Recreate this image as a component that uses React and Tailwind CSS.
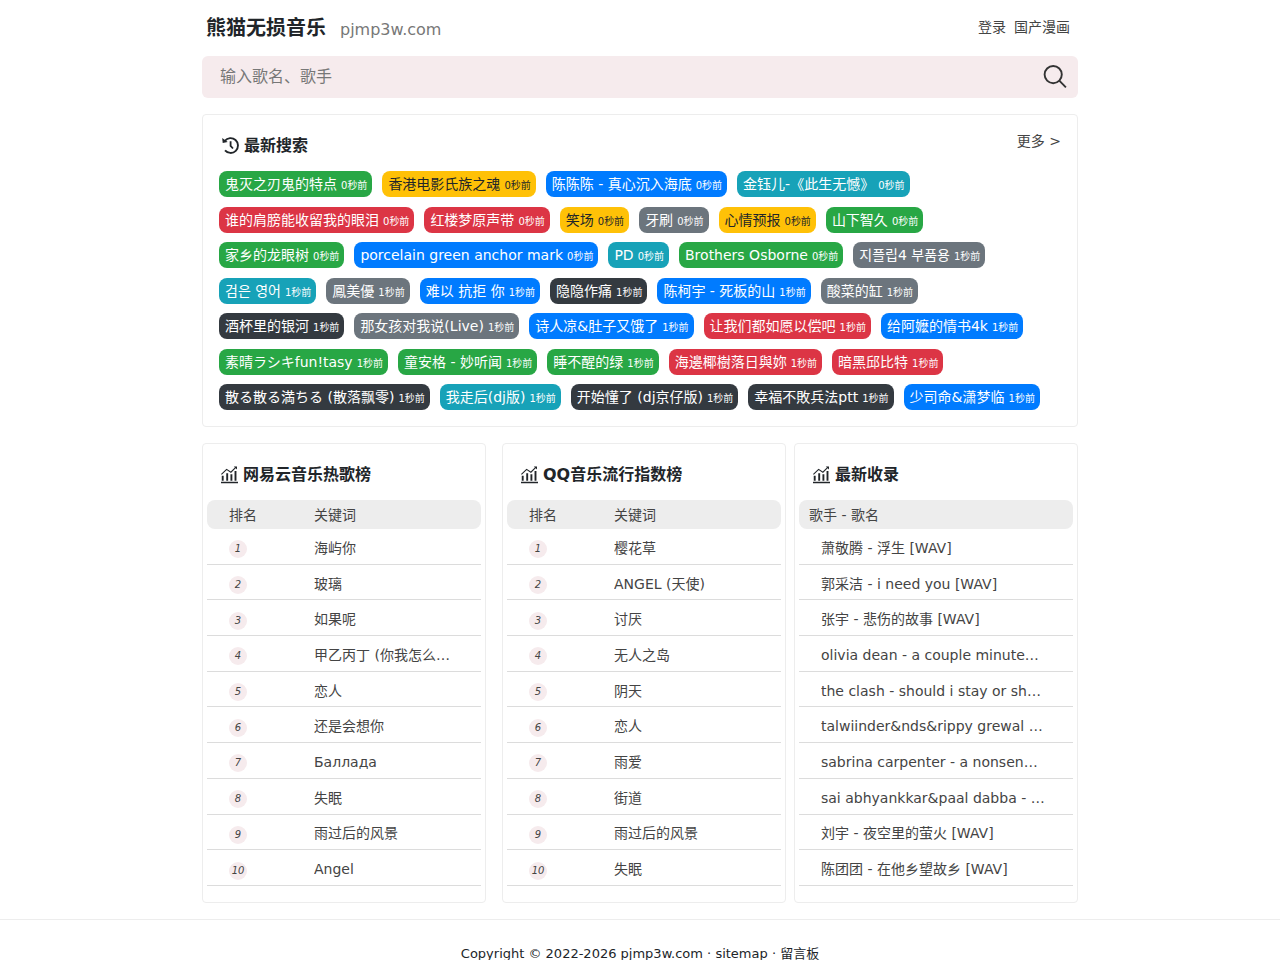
const FONT = 'font-["DejaVu_Sans","Noto_Sans_CJK_SC","Noto_Sans_CJK_KR",sans-serif]';

const TONES = {
  green: 'bg-[#28a745] text-white',
  yellow: 'bg-[#ffc107] text-[#212529]',
  blue: 'bg-[#007bff] text-white',
  teal: 'bg-[#17a2b8] text-white',
  red: 'bg-[#dc3545] text-white',
  gray: 'bg-[#6c757d] text-white',
  dark: 'bg-[#343a40] text-white',
};

const SEARCHES = [
  ['鬼灭之刃鬼的特点', 0, 'green'],
  ['香港电影氏族之魂', 0, 'yellow'],
  ['陈陈陈 - 真心沉入海底', 0, 'blue'],
  ['金钰儿-《此生无憾》', 0, 'teal'],
  ['谁的肩膀能收留我的眼泪', 0, 'red'],
  ['红楼梦原声带', 0, 'red'],
  ['笑场', 0, 'yellow'],
  ['牙刷', 0, 'gray'],
  ['心情预报', 0, 'yellow'],
  ['山下智久', 0, 'green'],
  ['家乡的龙眼树', 0, 'green'],
  ['porcelain green anchor mark', 0, 'blue'],
  ['PD', 0, 'teal'],
  ['Brothers Osborne', 0, 'green'],
  ['지플립4 부품용', 1, 'gray'],
  ['검은 영어', 1, 'teal'],
  ['鳳美優', 1, 'gray'],
  ['难以 抗拒 你', 1, 'blue'],
  ['隐隐作痛', 1, 'dark'],
  ['陈柯宇 - 死板的山', 1, 'blue'],
  ['酸菜的缸', 1, 'gray'],
  ['酒杯里的银河', 1, 'dark'],
  ['那女孩对我说(Live)', 1, 'gray'],
  ['诗人凉&肚子又饿了', 1, 'blue'],
  ['让我们都如愿以偿吧', 1, 'red'],
  ['给阿嬷的情书4k', 1, 'blue'],
  ['素晴ラシキfun!tasy', 1, 'green'],
  ['童安格 - 妙听闻', 1, 'green'],
  ['睡不醒的绿', 1, 'green'],
  ['海邊椰樹落日與妳', 1, 'red'],
  ['暗黑邱比特', 1, 'red'],
  ['散る散る満ちる (散落飘零)', 1, 'dark'],
  ['我走后(dj版)', 1, 'teal'],
  ['开始懂了 (dj京仔版)', 1, 'dark'],
  ['幸福不敗兵法ptt', 1, 'dark'],
  ['少司命&潇梦临', 1, 'blue'],
];

const NETEASE = ['海屿你', '玻璃', '如果呢', '甲乙丙丁 (你我怎么…', '恋人', '还是会想你', 'Баллада', '失眠', '雨过后的风景', 'Angel'];
const QQ = ['樱花草', 'ANGEL (天使)', '讨厌', '无人之岛', '阴天', '恋人', '雨爱', '街道', '雨过后的风景', '失眠'];
const LATEST = [
  '萧敬腾 - 浮生 [WAV]',
  '郭采洁 - i need you [WAV]',
  '张宇 - 悲伤的故事 [WAV]',
  'olivia dean - a couple minute…',
  'the clash - should i stay or sh…',
  'talwiinder&nds&rippy grewal …',
  'sabrina carpenter - a nonsen…',
  'sai abhyankkar&paal dabba - …',
  '刘宇 - 夜空里的萤火 [WAV]',
  '陈团团 - 在他乡望故乡 [WAV]',
];

function HistoryIcon() {
  return (
    <svg className="h-5 w-5 shrink-0" viewBox="0 0 20 20" fill="none" stroke="currentColor" strokeWidth="1.9" aria-hidden="true">
      <path d="M4.8 4.9A7.4 7.4 0 1 1 5 14.4" />
      <path d="M2.2 1.9l.5 5.2 5-1.2z" fill="currentColor" stroke="none" />
      <path d="M10.6 5.3v4.6l2.4 2.6" strokeWidth="1.8" />
    </svg>
  );
}

function ChartIcon() {
  return (
    <svg className="h-5 w-5 shrink-0" viewBox="0 1 20 20" fill="none" stroke="currentColor" aria-hidden="true">
      <path d="M2 18.5h17" strokeWidth="1.5" />
      <path d="M3.7 16.8v-5M8.2 16.8V9.2M12.4 16.8v-6.6M16.5 16.8V7" strokeWidth="1.9" />
      <path d="M2.4 10.4L7.6 5.4l4.3 2.8L17 3.2" strokeWidth="1.1" />
      <path d="M14.8 2.4h3.2v3.2z" fill="currentColor" stroke="none" />
    </svg>
  );
}

function SearchIcon() {
  return (
    <svg className="h-7 w-7" viewBox="0 0 28 28" fill="none" stroke="currentColor" strokeWidth="1.9" aria-hidden="true">
      <circle cx="12.2" cy="11.6" r="8.6" />
      <path d="M18.3 17.7l6.6 6.6" />
    </svg>
  );
}

function CardTitle({ children }) {
  return (
    <h2 className="flex items-center gap-1 px-3 text-base font-bold text-[#212529]">
      <ChartIcon />
      {children}
    </h2>
  );
}

function RankCard({ title, songs, className }) {
  return (
    <section className={`min-w-0 flex-1 rounded border border-[#ededed] px-1 pt-[19px] pb-4 ${className}`}>
      <CardTitle>{title}</CardTitle>
      <table className="mt-[13px] h-[386px] w-full table-fixed border-separate border-spacing-0 text-sm text-[#444]">
        <thead>
          <tr>
            <th className="h-[29px] w-[85px] rounded-l-lg bg-[#ededed] pl-[22px] text-left font-normal">排名</th>
            <th className="h-[29px] rounded-r-lg bg-[#ededed] pl-[22px] text-left font-normal">关键词</th>
          </tr>
        </thead>
        <tbody>
          {songs.map((song, i) => (
            <tr key={i}>
              <td className="border-b border-[#dcdcdc] pt-[6px] pl-[22px]">
                <i className="flex h-[18px] w-[18px] items-center justify-center rounded-full bg-[#f6ebed] text-[10px] leading-[18px]">{i + 1}</i>
              </td>
              <td className="h-[35px] border-b border-[#dcdcdc] pt-[3px] pr-[22px] pl-[22px]">
                <a href="#" className="block truncate">{song}</a>
              </td>
            </tr>
          ))}
        </tbody>
      </table>
    </section>
  );
}

export default function App() {
  return (
    <div lang="zh-CN" className={`${FONT} bg-white text-[#212529]`}>
      <div className="mx-auto w-full max-w-[876px]">
        <header className="flex h-14 items-center justify-between pr-2 pl-1">
          <div className="flex items-baseline gap-[14px]">
            <h1 className="text-xl font-bold">
              <a href="#">熊猫无损音乐</a>
            </h1>
            <span className="text-base text-[#777]">pjmp3w.com</span>
          </div>
          <nav className="flex gap-2 pb-[2px] text-sm text-[#444]">
            <a href="#">登录</a>
            <a href="#">国产漫画</a>
          </nav>
        </header>

        <form className="flex h-[42px] items-center rounded-md bg-[#f6ebed] pr-[9px] pl-[18px]" onSubmit={(e) => e.preventDefault()}>
          <input
            type="text"
            aria-label="输入歌名、歌手"
            placeholder="输入歌名、歌手"
            className="min-w-0 flex-1 bg-transparent text-base outline-none placeholder:text-[#777]"
          />
          <button type="submit" aria-label="搜索" className="text-[#333]">
            <SearchIcon />
          </button>
        </form>

        <section className="mt-4 rounded border border-[#ededed] px-4 py-4">
          <div className="flex items-start justify-between">
            <h2 className="flex items-center gap-1 pt-[3px] pl-[1px] text-base font-bold">
              <HistoryIcon />
              最新搜索
            </h2>
            <a href="#" className="text-sm text-[#444]">更多 &gt;</a>
          </div>
          <div className="mt-[13px] flex min-h-[239px] flex-wrap content-between gap-x-[10px] gap-y-[9px] pr-[10px]">
            {SEARCHES.map(([name, age, tone]) => (
              <a key={name} href="#" className={`flex items-baseline gap-1 rounded-lg py-[3px] pr-[5px] pl-[6px] text-sm whitespace-nowrap ${TONES[tone]}`}>
                <span>{name}</span>
                <span className="text-[10px]">{age}秒前</span>
              </a>
            ))}
          </div>
        </section>

        <div className="mt-4 flex">
          <RankCard title="网易云音乐热歌榜" songs={NETEASE} className="mr-4" />
          <RankCard title="QQ音乐流行指数榜" songs={QQ} className="mr-2" />
          <section className="min-w-0 flex-1 rounded border border-[#ededed] px-1 pt-[19px] pb-4">
            <CardTitle>最新收录</CardTitle>
            <table className="mt-[13px] h-[386px] w-full table-fixed border-separate border-spacing-0 text-sm text-[#444]">
              <thead>
                <tr>
                  <th className="h-[29px] rounded-lg bg-[#ededed] pl-[10px] text-left font-normal">歌手 - 歌名</th>
                </tr>
              </thead>
              <tbody>
                {LATEST.map((song) => (
                  <tr key={song}>
                    <td className="h-[35px] border-b border-[#dcdcdc] pt-[3px] pr-[22px] pl-[22px]">
                      <a href="#" className="block truncate">{song}</a>
                    </td>
                  </tr>
                ))}
              </tbody>
            </table>
          </section>
        </div>
      </div>

      <footer className="mt-4 border-t border-[#ededed] pt-6 text-center text-[13px] leading-5">
        Copyright © 2022-2026 pjmp3w.com · <a href="#">sitemap</a> · <a href="#">留言板</a>
      </footer>
    </div>
  );
}
